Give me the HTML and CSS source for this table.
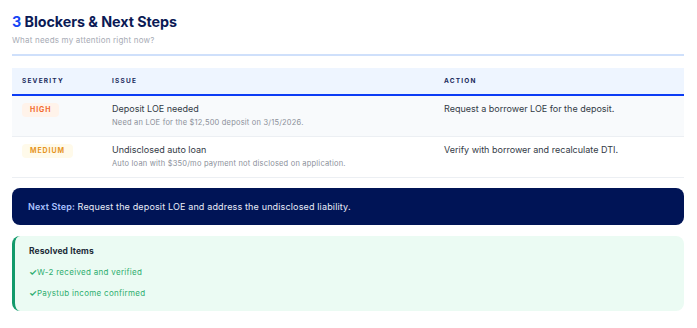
FILE: index.html
```html
<!DOCTYPE html>
<html>
<head>
<meta charset="utf-8">
<link rel="stylesheet" href="styles.css">
</head>
<body>
<div class="page">
  <header class="head">
    <h1 class="title"><span class="num">3</span> Blockers &amp; Next Steps</h1>
    <p class="sub">What needs my attention right now?</p>
  </header>
  <table class="grid">
    <thead>
      <tr>
        <th class="c-sev">Severity</th>
        <th class="c-issue">Issue</th>
        <th class="c-act">Action</th>
      </tr>
    </thead>
    <tbody>
      <tr class="alt">
        <td><span class="badge high">High</span></td>
        <td>
          <div class="it">Deposit LOE needed</div>
          <div class="id">Need an LOE for the $12,500 deposit on 3/15/2026.</div>
        </td>
        <td><div class="it">Request a borrower LOE for the deposit.</div></td>
      </tr>
      <tr>
        <td><span class="badge med">Medium</span></td>
        <td>
          <div class="it">Undisclosed auto loan</div>
          <div class="id">Auto loan with $350/mo payment not disclosed on application.</div>
        </td>
        <td><div class="it">Verify with borrower and recalculate DTI.</div></td>
      </tr>
    </tbody>
  </table>
  <div class="next"><strong>Next Step:</strong> Request the deposit LOE and address the undisclosed liability.</div>
  <div class="resolved">
    <div class="r-title">Resolved Items</div>
    <div class="r-item"><span class="ck">✓</span>W-2 received and verified</div>
    <div class="r-item"><span class="ck">✓</span>Paystub income confirmed</div>
  </div>
</div>
</body>
</html>
```

FILE: styles.css
```css
* { box-sizing: border-box; }
html, body { margin: 0; padding: 0; background: #ffffff; }
body { font-family: Inter, "Noto Sans", sans-serif; color: #2b3340; }
.page { padding: 12px 13px 0 12px; }
.head { border-bottom: 2px solid #cfe0fb; padding-bottom: 9px; }
.title { margin: 0; font-size: 14.3px; line-height: 20px; font-weight: 700; color: #0b1a55; letter-spacing: -0.05px; }
.num { color: #1546f5; }
.sub { margin: 3px 0 0; font-size: 8px; line-height: 10px; color: #a7abb5; letter-spacing: 0.2px; }
.grid { width: 100%; border-collapse: collapse; margin-top: 12px; }
.grid th { background: #eef5ff; text-align: left; font-size: 6.5px; font-weight: 700; letter-spacing: 1.2px; text-transform: uppercase; color: #1a2a5c; height: 27px; padding: 0 10px; border-bottom: 2px solid #0b3cf5; }
.c-sev { width: 90px; }
.c-issue { width: 332px; }
.grid td { vertical-align: top; padding: 7px 10px 8px; border-bottom: 1px solid #eceff3; font-size: 9px; }
.grid tr.alt td { background: #f8fafc; }
.badge { display: inline-block; font-size: 7px; font-weight: 700; letter-spacing: 0.9px; text-transform: uppercase; padding: 3px 8px; border-radius: 4px; line-height: 8px; }
.badge.high { background: #fff3ea; color: #f2692c; }
.badge.med { background: #fffaea; color: #e6951e; }
.it { color: #333a46; font-size: 9px; line-height: 12px; }
.id { color: #8b909a; font-size: 7.5px; line-height: 10px; margin-top: 3px; letter-spacing: 0.2px; }
.next { margin-top: 10px; background: #001456; color: #e9edf8; border-radius: 8px; padding: 13px 16px; font-size: 9px; line-height: 11px; letter-spacing: 0.15px; }
.next strong { color: #a9c1ff; font-weight: 600; }
.resolved { margin-top: 11px; background: #ebfbf3; border-left: 3px solid #129a6b; border-radius: 8px; padding: 10px 14px 12px; }
.r-title { font-size: 8.5px; font-weight: 700; color: #212b38; line-height: 11px; letter-spacing: 0.1px; }
.r-item { font-size: 8px; color: #2fae6f; line-height: 11px; margin-top: 10px; letter-spacing: 0.3px; }
.ck { font-size: 9px; line-height: 10px; font-weight: 700; margin-right: 0; letter-spacing: 0; }
```
